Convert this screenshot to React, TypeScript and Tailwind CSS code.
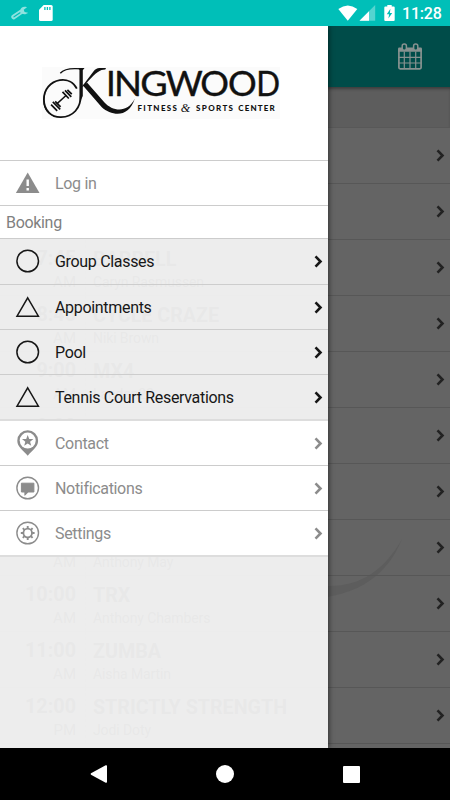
import React from "react";

type Session = { time?: string; half?: string; title?: string; coach?: string };

const sessions: Session[] = [
  {},
  {},
  { time: "7:45", half: "AM", title: "BARBELL", coach: "Caryn Rasmussen" },
  { time: "8:45", half: "AM", title: "CYCLE CRAZE", coach: "Niki Brown" },
  { time: "9:00", half: "AM", title: "MX4", coach: "Landen22" },
  { time: "9:00" },
  {},
  { half: "AM", coach: "Anthony May" },
  { time: "10:00", half: "AM", title: "TRX", coach: "Anthony Chambers" },
  { time: "11:00", half: "AM", title: "ZUMBA", coach: "Aisha Martin" },
  { time: "12:00", half: "PM", title: "STRICTLY STRENGTH", coach: "Jodi Doty" },
];

function Chevron({ className }: { className: string }) {
  return (
    <svg className={className} width="9" height="13" viewBox="0 0 9 13" fill="none" stroke="currentColor" strokeWidth="2.6">
      <path d="M1.5 1.4 6.5 6.5 1.5 11.6" />
    </svg>
  );
}

function StatusBar() {
  return (
    <div className="flex h-[26px] shrink-0 items-center justify-between bg-[#00bfb8] pr-[8px] pl-[11px]">
      <div className="flex items-center gap-[11px]">
        <svg width="17" height="14" viewBox="0 0 17 14" fill="none">
          <path d="M2.6 11 10.5 5.6" stroke="#8fe2df" strokeWidth="4.6" strokeLinecap="round" />
          <path d="M3 10.8 9 6.8" stroke="#00bfb8" strokeWidth="1.2" strokeLinecap="round" />
          <path d="M16 1.2C12.6-.2 9 1.6 9.4 4.9c.6 3.4 5 4.4 7.6 1.8l-3.4-.6-.9-2.4z" fill="#8fe2df" />
        </svg>
        <svg width="14" height="16" viewBox="0 0 14 16">
          <path d="M4.7 0H12.2Q13.7 0 13.7 1.5V14.5Q13.7 16 12.2 16H1.5Q0 16 0 14.5V4.8z" fill="#fff" />
          <path d="M5.9 2v3M8.4 2v3M10.9 2v3" stroke="#00bfb8" strokeWidth="1.3" />
        </svg>
      </div>
      <div className="flex items-center">
        <svg width="20" height="16" viewBox="0 0 20 16">
          <path d="M.3 4Q9.8-3.1 19.3 4L9.8 15.7z" fill="#fff" />
        </svg>
        <svg className="ml-[1px]" width="17" height="16" viewBox="0 0 17 16">
          <path d="M16.2 0V15.8H.5z" fill="#55d4d0" />
          <path d="M10 6.2V15.8H.5z" fill="#fff" />
        </svg>
        <svg className="ml-[8px]" width="11" height="16" viewBox="0 0 11 16">
          <path d="M3.3 0h4.4v1.6h2q1 0 1 1V15q0 1-1 1H1.3q-1 0-1-1V2.6q0-1 1-1h2z" fill="#fff" />
          <path d="M6.4 3.8 2.8 9.2h2.3L4.4 13.4 8.2 7.9H5.9z" fill="#00bfb8" />
        </svg>
        <span className="mt-[2px] ml-[7px] w-[40px] text-[16px] leading-[16px] font-medium tracking-[-0.2px] whitespace-nowrap text-white">11:28</span>
      </div>
    </div>
  );
}

function Schedule() {
  return (
    <div className="flex h-full flex-col bg-[#646464]">
      <div className="flex h-[61px] shrink-0 justify-end bg-[#004c49] pt-[17px] pr-[27px]">
        <svg width="26" height="28" viewBox="0 0 26 28" fill="none" stroke="#879290">
          <path d="M1.9 6V24.6Q1.9 25.8 3.1 25.8H22.9Q24.1 25.8 24.1 24.6V6" strokeWidth="1.7" />
          <path d="M1 8.8V5.8Q1 4.6 2.2 4.6H23.8Q25 4.6 25 5.8V8.8z" fill="#879290" stroke="none" />
          <path d="M1.5 14.3H24.5M1.5 20H24.5M7.3 8.5V26M13 8.5V26M18.7 8.5V26" strokeWidth="1.2" />
          <rect x="5.2" y="1" width="4.2" height="6.2" rx="2" fill="#004c49" strokeWidth="1.5" />
          <rect x="16.6" y="1" width="4.2" height="6.2" rx="2" fill="#004c49" strokeWidth="1.5" />
        </svg>
      </div>
      <div className="h-[41px] shrink-0 border-b border-[#585858] bg-[#5d5d5d] shadow-[inset_0_3px_3px_-1px_rgba(0,0,0,0.35)]" />
      <div className="relative">
        <svg className="absolute top-[405px] left-[60px]" width="350" height="70" viewBox="0 0 350 70">
          <path d="M342 6C324 38 299 54 267 53H240V66C290 66 325 48 342 6z" fill="#5d5d5d" />
        </svg>
        {sessions.map((s, i) => (
          <div key={i} className="relative flex h-[56px] items-center border-b border-[#575757] pr-[5px] text-black">
            <div className="flex h-full w-[86px] flex-col items-end border-r border-dashed border-[#585858] pt-[7px] pr-[9px]">
              <span className="h-[23px] text-[19.8px] leading-[23px] font-bold">{s.time}</span>
              <span className="text-[15px] leading-[24px]">{s.half}</span>
            </div>
            <div className="flex h-full flex-1 flex-col pt-[8px] pl-[7px]">
              <span className="h-[23px] text-[19.7px] leading-[23px] font-bold whitespace-nowrap">{s.title}</span>
              <span className="text-[14px] leading-[22px] tracking-[-0.1px]">{s.coach}</span>
            </div>
            <Chevron className="text-[#222]" />
          </div>
        ))}
      </div>
    </div>
  );
}

function Logo() {
  return (
    <svg width="238" height="52" viewBox="42 67 238 52" fill="none" stroke="#111">
      <rect x="42" y="67" width="238" height="52" fill="#fbfbfb" stroke="none" />
      <path d="M60.3 73.3C64 69 69 68.4 76 68.6L83 68.9" strokeWidth="1.4" />
      <path d="M76.8 88.6C73.5 82.2 67 79 59.8 80.2C50.5 81.8 43.8 89.5 43.9 99.5C44 110.5 51.5 117.5 61 117.2C73 116.8 80.8 108.5 80.8 95V69" strokeWidth="1.8" />
      <path d="M46.5 91C41.5 101 45 114 56.5 116.9C44.5 115.5 39.6 102 46.5 91z" fill="#111" stroke="none" />
      <path d="M78 68H84.5L82.8 70.2V96L79.5 103V70z" fill="#111" stroke="none" />
      <path d="M106 68H99.5C96.8 68.2 95.3 69.2 93.8 71L81.3 87.6L84.6 85.6C90.5 78.5 96.5 72 101.5 70.1L105.3 69.5z" fill="#111" stroke="none" />
      <path d="M82.7 85.3L87.2 82.8L104.5 102.4C112.5 111 127 114 134.9 98.6C128.4 119 111.5 115.6 101.8 107.2z" fill="#111" stroke="none" />
      <path d="M56.8 103.9 66.3 95.2" strokeWidth="1.5" />
      <g strokeWidth="1.7">
        <path d="M52.8 101.8 60.2 109.4M51.1 104.7 57.2 110.8M55.2 101.4 60.6 106.8M62.5 91.9 68.8 98.5M65 90.4 71.3 96.8M67.4 89.8 71.8 94.1" />
      </g>
      <g fill="#111" strokeWidth="0.4" fontFamily="Lato, sans-serif" fontSize="34">
        <text y="96" x="106.1" textLength="9.8" lengthAdjust="spacingAndGlyphs">I</text>
        <text y="96" x="114.1" textLength="28" lengthAdjust="spacingAndGlyphs">N</text>
        <text y="96" x="140.2" textLength="27.5" lengthAdjust="spacingAndGlyphs">G</text>
        <text y="96" x="165.7" textLength="37" lengthAdjust="spacingAndGlyphs">W</text>
        <text y="96" x="200.3" textLength="28.7" lengthAdjust="spacingAndGlyphs">O</text>
        <text y="96" x="228" textLength="28.7" lengthAdjust="spacingAndGlyphs">O</text>
        <text y="96" x="256.3" textLength="23.8" lengthAdjust="spacingAndGlyphs">D</text>
      </g>
      <g fill="#111" stroke="none" fontFamily="Lato, sans-serif" fontWeight="900" fontSize="8">
        <text x="137.5" y="110.6" textLength="39.5">FITNESS</text>
        <text x="196" y="110.6" textLength="37">SPORTS</text>
        <text x="238.3" y="110.6" textLength="36.5">CENTER</text>
      </g>
      <text x="180.7" y="112" fontFamily="Liberation Serif, serif" fontStyle="italic" fontSize="13" fill="#111" stroke="none" textLength="9.5" lengthAdjust="spacingAndGlyphs">&amp;</text>
    </svg>
  );
}

function MenuIcon({ kind }: { kind: string }) {
  return (
    <svg width="26" height="28" viewBox="0 0 26 28" fill="none" stroke="currentColor" strokeWidth="1.5">
      {kind === "circle" && <circle cx="12.7" cy="14" r="10.8" />}
      {kind === "triangle" && <path d="M12.7 4.8 23.4 23.2H2z" />}
      {kind === "alert" && (
        <>
          <path d="M12.7 3.5 24.5 24H.9z" fill="currentColor" stroke="none" />
          <path d="M12.7 10.5v6.5M12.7 19v2.4" stroke="#fff" strokeWidth="2.4" />
        </>
      )}
      {kind === "pin" && (
        <>
          <path d="M12.7 1.3A10.4 10.4 0 0 0 2.3 11.7C2.3 18 8.2 21 12.7 26.8 17.2 21 23.1 18 23.1 11.7A10.4 10.4 0 0 0 12.7 1.3z" fill="currentColor" stroke="none" />
          <circle cx="12.7" cy="11.6" r="8" fill="#fff" stroke="none" />
          <path d="m12.7 6 1.5 3.9 4.2.2-3.3 2.6 1.1 4.1-3.5-2.3-3.5 2.3 1.1-4.1-3.3-2.6 4.2-.2z" fill="currentColor" stroke="none" />
        </>
      )}
      {kind === "chat" && (
        <>
          <circle cx="12.7" cy="14" r="10.8" strokeWidth="1.4" />
          <path d="M6.4 9.2H18.9V18H13.2L9.9 21.3V18H6.4z" fill="currentColor" strokeWidth="1" />
        </>
      )}
      {kind === "gear" && (
        <>
          <circle cx="12.7" cy="14" r="10.8" strokeWidth="1.4" />
          <circle cx="12.7" cy="14" r="4.3" strokeWidth="1.8" />
          <path d="M12.7 7.1v2.4M12.7 18.5v2.4M5.8 14h2.4M17.2 14h2.4M7.8 9.1l1.7 1.7M15.9 17.2l1.7 1.7M17.6 9.1l-1.7 1.7M9.5 17.2l-1.7 1.7" strokeWidth="1.9" />
        </>
      )}
    </svg>
  );
}

function MenuRow({ kind, label, className, chevron = true }: { kind: string; label: string; className: string; chevron?: boolean }) {
  return (
    <div className={"flex shrink-0 items-center pr-[5px] pl-[15px] " + className}>
      <MenuIcon kind={kind} />
      <span className="mt-[2px] ml-[14px] flex-1 text-[16px] leading-[20px] tracking-[-0.32px] whitespace-nowrap">{label}</span>
      {chevron && <Chevron className="" />}
    </div>
  );
}

function Drawer() {
  return (
    <div className="absolute inset-y-0 left-0 flex w-[328px] flex-col bg-[#f4f4f4]/95 shadow-[1px_0_5px_rgba(0,0,0,0.5)]">
      <div className="h-[135px] shrink-0 border-b border-[#ccc] bg-white pt-[41px] pl-[42px]">
        <Logo />
      </div>
      <MenuRow kind="alert" label="Log in" chevron={false} className="h-[45px] border-b border-[#ccc] bg-white text-[#8c8c8c]" />
      <div className="flex h-[33px] shrink-0 items-center border-b border-[#ccc] bg-white pt-[2px] pl-[6px] text-[16px] tracking-[-0.32px] text-[#808080]">Booking</div>
      <div className="flex flex-col text-[#171717]">
        <MenuRow kind="circle" label="Group Classes" className="h-[46px] border-b border-[#cdcdcd] pb-px" />
        <MenuRow kind="triangle" label="Appointments" className="h-[45px] border-b border-[#cdcdcd]" />
        <MenuRow kind="circle" label="Pool" className="h-[45px] border-b border-[#cdcdcd]" />
        <MenuRow kind="triangle" label="Tennis Court Reservations" className="h-[46px] border-b-2 border-[#ddd]" />
      </div>
      <div className="flex flex-col text-[#8c8c8c]">
        <MenuRow kind="pin" label="Contact" className="h-[45px] border-b border-[#ccc] bg-white" />
        <MenuRow kind="chat" label="Notifications" className="h-[45px] border-b border-[#ccc] bg-white" />
        <MenuRow kind="gear" label="Settings" className="h-[46px] border-b-2 border-[#ddd] bg-white" />
      </div>
    </div>
  );
}

export default function App() {
  return (
    <div className="flex h-[800px] w-[450px] flex-col overflow-hidden bg-black font-[Roboto,sans-serif]">
      <StatusBar />
      <div className="relative h-[722px] shrink-0 overflow-hidden">
        <Schedule />
        <Drawer />
      </div>
      <div className="flex h-[52px] items-center bg-black pl-[90px]">
        <svg width="17" height="18" viewBox="0 0 17 18">
          <path d="M15.7.3Q17 0 17 1V17Q17 18 15.7 17.7L1 9.8Q.2 9 1 8.2z" fill="#fff" />
        </svg>
        <div className="ml-[109px] h-[18px] w-[18px] rounded-full bg-white" />
        <div className="ml-[109px] h-[17px] w-[17px] rounded-[1px] bg-white" />
      </div>
    </div>
  );
}
